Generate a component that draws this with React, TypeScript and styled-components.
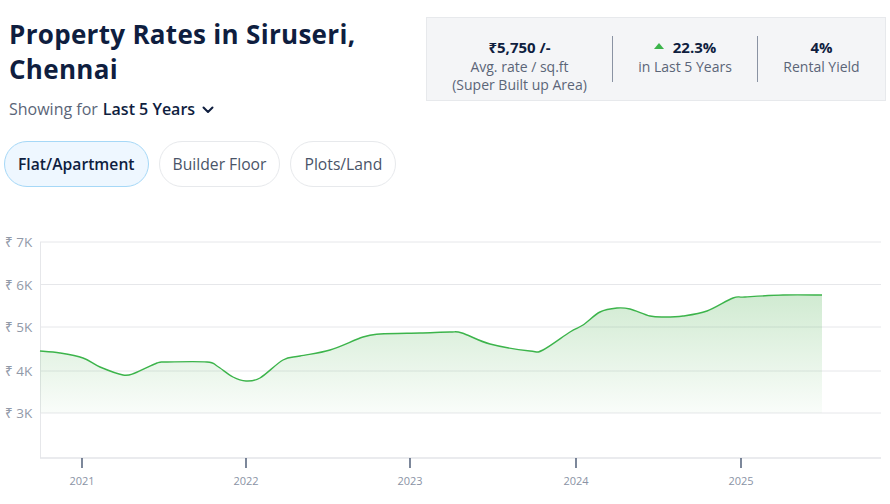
import React from "react";
import styled, { createGlobalStyle } from "styled-components";

const GlobalStyle = createGlobalStyle`
  html, body {
    margin: 0;
    padding: 0;
    background: #ffffff;
  }
  body {
    font-family: "Open Sans", "Noto Sans", Arial, sans-serif;
    color: #0f1e3f;
  }
`;

const Page = styled.div`
  width: 890px;
  height: 504px;
  overflow: hidden;
  position: relative;
`;

const Header = styled.div`
  display: flex;
  justify-content: space-between;
  align-items: flex-start;
  height: 130px;
`;

const TitleBlock = styled.div`
  padding: 17px 0 0 9px;
`;

const Title = styled.h1`
  margin: 0;
  font-size: 26px;
  line-height: 35px;
  font-weight: 700;
  letter-spacing: 0.3px;
  color: #0f1e3f;
`;

const Showing = styled.div`
  display: flex;
  align-items: center;
  margin-top: 12px;
  font-size: 16px;
  line-height: 20px;
  color: #5b6578;

  b {
    font-weight: 600;
    color: #0f1e3f;
    margin-left: 5px;
  }

  svg {
    margin-left: 7px;
    margin-top: 2px;
  }
`;

const StatsBox = styled.div`
  display: flex;
  margin: 17px 4px 0 0;
  width: 458px;
  height: 82px;
  background: #f4f5f7;
  border: 1px solid #e7e9ec;
`;

const Stat = styled.div<{ $w: number }>`
  width: ${(p) => p.$w}px;
  padding-top: 18px;
  text-align: center;
`;

const StatValue = styled.div`
  display: flex;
  align-items: center;
  justify-content: center;
  font-size: 15px;
  line-height: 22px;
  font-weight: 700;
  color: #0f1e3f;
`;

const StatText = styled.div`
  font-size: 14px;
  line-height: 18px;
  color: #5b6578;
`;

const UpArrow = styled.span`
  display: inline-block;
  width: 0;
  height: 0;
  border-left: 5px solid transparent;
  border-right: 5px solid transparent;
  border-bottom: 6px solid #3cb44b;
  margin-right: 9px;
  margin-bottom: 2px;
`;

const Divider = styled.div`
  width: 1px;
  height: 46px;
  margin-top: 18px;
  background: #8a93a3;
`;

const Pills = styled.div`
  display: flex;
  gap: 10px;
  padding: 11px 0 0 4px;
  height: 53px;
`;

const Pill = styled.button<{ $active?: boolean }>`
  height: 46px;
  padding: 0 13px;
  border-radius: 23px;
  font-family: "Open Sans", "Noto Sans", Arial, sans-serif;
  font-size: 15.7px;
  font-weight: ${(p) => (p.$active ? 600 : 400)};
  color: ${(p) => (p.$active ? "#0f1e3f" : "#4a5468")};
  background: ${(p) => (p.$active ? "#eef7ff" : "#ffffff")};
  border: 1px solid ${(p) => (p.$active ? "#a6d8f7" : "#e7e9ec")};
  cursor: pointer;
`;

const ChartWrap = styled.div`
  height: 310px;

  svg {
    display: block;
  }
`;

const AxisLabel = styled.text`
  font-family: "Open Sans", "Noto Sans", Arial, sans-serif;
  font-size: 13.5px;
  fill: #9199a8;
`;

const YearLabel = styled.text`
  font-family: "Open Sans", "Noto Sans", Arial, sans-serif;
  font-size: 11px;
  fill: #8a93a5;
`;

// page coordinates of the price line, read from the design
const points: [number, number][] = [
  [40, 351], [60, 353], [83, 358], [100, 367], [123, 375], [135, 373],
  [157, 363], [167, 362], [207, 362], [217, 366], [233, 377], [246, 381],
  [260, 378], [283, 360], [300, 356], [330, 350], [363, 337], [380, 334],
  [420, 333], [450, 332], [462, 333], [490, 344], [530, 351], [543, 350],
  [570, 332], [583, 325], [600, 312], [617, 308], [630, 309], [650, 316],
  [665, 317], [683, 316], [707, 311], [733, 298], [745, 297], [783, 295],
  [822, 295],
];

const smoothPath = (pts: [number, number][]) => {
  let d = `M${pts[0][0]},${pts[0][1]}`;
  for (let i = 0; i < pts.length - 1; i++) {
    const p0 = pts[i - 1] || pts[i];
    const p1 = pts[i];
    const p2 = pts[i + 1];
    const p3 = pts[i + 2] || p2;
    const t = 6;
    const c1x = p1[0] + (p2[0] - p0[0]) / t;
    const c1y = p1[1] + (p2[1] - p0[1]) / t;
    const c2x = p2[0] - (p3[0] - p1[0]) / t;
    const c2y = p2[1] - (p3[1] - p1[1]) / t;
    d += ` C${c1x.toFixed(1)},${c1y.toFixed(1)} ${c2x.toFixed(1)},${c2y.toFixed(1)} ${p2[0]},${p2[1]}`;
  }
  return d;
};

const gridRows = [
  { y: 242, label: "₹ 7K" },
  { y: 284.5, label: "₹ 6K" },
  { y: 327, label: "₹ 5K" },
  { y: 371, label: "₹ 4K" },
  { y: 413, label: "₹ 3K" },
];

const years = [
  { x: 82, label: "2021" },
  { x: 246, label: "2022" },
  { x: 410, label: "2023" },
  { x: 576, label: "2024" },
  { x: 741, label: "2025" },
];

const PriceChart = () => {
  const line = smoothPath(points);
  const area = `${line} L822,413 L40,413 Z`;
  return (
    <svg width="890" height="310" viewBox="0 194 890 310">
      <defs>
        <linearGradient id="areaFill" x1="0" y1="295" x2="0" y2="413" gradientUnits="userSpaceOnUse">
          <stop offset="0" stopColor="#4cb050" stopOpacity="0.26" />
          <stop offset="1" stopColor="#4cb050" stopOpacity="0.03" />
        </linearGradient>
      </defs>
      {gridRows.map((r) => (
        <g key={r.label}>
          <line x1="40" x2="881" y1={r.y} y2={r.y} stroke="#e6e7ea" strokeWidth="1" />
          <AxisLabel x="5" y={r.y + 5}>{r.label}</AxisLabel>
        </g>
      ))}
      <line x1="40.5" x2="40.5" y1="242" y2="458" stroke="#e6e7ea" strokeWidth="1" />
      <path d={area} fill="url(#areaFill)" />
      <path d={line} fill="none" stroke="#3cb44b" strokeWidth="1.4" />
      <line x1="40" x2="881" y1="458" y2="458" stroke="#e3e4e8" strokeWidth="1.6" />
      {years.map((yr) => (
        <g key={yr.label}>
          <line x1={yr.x} x2={yr.x} y1="458" y2="468" stroke="#253858" strokeWidth="1.2" />
          <YearLabel x={yr.x} y="485" textAnchor="middle">{yr.label}</YearLabel>
        </g>
      ))}
    </svg>
  );
};

const ChevronDown = () => (
  <svg width="12" height="8" viewBox="0 0 12 8">
    <path d="M1.5 1.5 L6 6 L10.5 1.5" fill="none" stroke="#0f1e3f" strokeWidth="2" strokeLinecap="round" strokeLinejoin="round" />
  </svg>
);

export default function App() {
  return (
    <Page>
      <GlobalStyle />
      <Header>
        <TitleBlock>
          <Title>
            Property Rates in Siruseri,
            <br />
            Chennai
          </Title>
          <Showing>
            Showing for <b>Last 5 Years</b>
            <ChevronDown />
          </Showing>
        </TitleBlock>
        <StatsBox>
          <Stat $w={185}>
            <StatValue>₹5,750 /-</StatValue>
            <StatText>Avg. rate / sq.ft</StatText>
            <StatText>(Super Built up Area)</StatText>
          </Stat>
          <Divider />
          <Stat $w={144}>
            <StatValue>
              <UpArrow />
              22.3%
            </StatValue>
            <StatText>in Last 5 Years</StatText>
          </Stat>
          <Divider />
          <Stat $w={127}>
            <StatValue>4%</StatValue>
            <StatText>Rental Yield</StatText>
          </Stat>
        </StatsBox>
      </Header>
      <Pills>
        <Pill $active>Flat/Apartment</Pill>
        <Pill>Builder Floor</Pill>
        <Pill>Plots/Land</Pill>
      </Pills>
      <ChartWrap>
        <PriceChart />
      </ChartWrap>
    </Page>
  );
}
